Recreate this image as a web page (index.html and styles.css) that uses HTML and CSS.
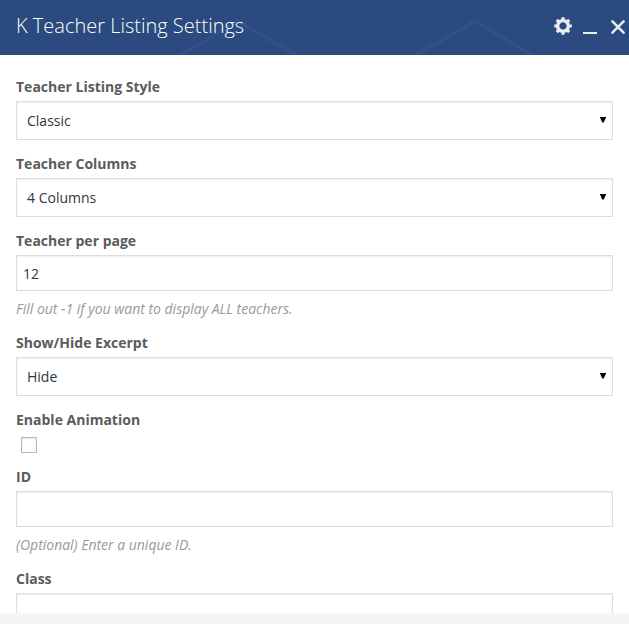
FILE: index.html
```html
<!DOCTYPE html>
<html lang="en">
<head>
<meta charset="utf-8">
<title>K Teacher Listing Settings</title>
<link rel="stylesheet" href="styles.css">
</head>
<body>
<div class="panel">
  <header class="header">
    <svg class="pattern" width="629" height="55" viewBox="0 0 629 55"><path d="M178 57L238 21L299 57M413 57L475 21L535 57"/></svg>
    <h1 class="title">K Teacher Listing Settings</h1>
    <div class="controls">
      <svg class="gear" width="18" height="18" viewBox="-9 -9 18 18">
        <circle r="5.4"/>
        <path d="M0-6V-8.8M0 6V8.8M-6 0H-8.8M6 0H8.8M4.2-4.2L6.2-6.2M-4.2-4.2L-6.2-6.2M4.2 4.2L6.2 6.2M-4.2 4.2L-6.2 6.2"/>
      </svg>
      <span class="minimize"></span>
      <svg class="close" width="14" height="14" viewBox="0 0 14 14"><path d="M1.4 1.4L12.6 12.6M12.6 1.4L1.4 12.6"/></svg>
    </div>
  </header>
  <main class="form">
    <div class="field">
      <div class="label">Teacher Listing Style</div>
      <div class="box select"><span>Classic</span><i class="arrow"></i></div>
    </div>
    <div class="field">
      <div class="label">Teacher Columns</div>
      <div class="box select"><span>4 Columns</span><i class="arrow"></i></div>
    </div>
    <div class="field">
      <div class="label">Teacher per page</div>
      <div class="box input">12</div>
      <div class="hint">Fill out -1 if you want to display ALL teachers.</div>
    </div>
    <div class="field">
      <div class="label">Show/Hide Excerpt</div>
      <div class="box select"><span>Hide</span><i class="arrow"></i></div>
    </div>
    <div class="field">
      <div class="label">Enable Animation</div>
      <div class="checkbox"></div>
    </div>
    <div class="field">
      <div class="label">ID</div>
      <div class="box input"></div>
      <div class="hint">(Optional) Enter a unique ID.</div>
    </div>
    <div class="field">
      <div class="label">Class</div>
      <div class="box input"></div>
    </div>
  </main>
  <footer class="footer"></footer>
</div>
</body>
</html>
```
FILE: styles.css
```css
* { box-sizing: border-box; }
body {
  margin: 0;
  font: 14px/20px "Open Sans", sans-serif;
  color: #32373c;
  background: #fff;
}
.panel {
  display: flex;
  flex-direction: column;
  height: 624px;
  overflow: hidden;
}
.header {
  position: relative;
  display: flex;
  flex: 0 0 55px;
  justify-content: space-between;
  padding: 0 4px 0 16px;
  background: #2b4b80;
}
.pattern { position: absolute; left: 0; top: 0; }
.pattern path { fill: none; stroke: #305088; stroke-width: 4; }
.title {
  position: relative;
  margin: 0;
  font-size: 20px;
  font-weight: 300;
  line-height: 52px;
  color: #fff;
  white-space: nowrap;
}
.controls { position: relative; display: flex; align-items: flex-start; }
.gear { margin: 17px 11px 0 0; }
.gear circle { fill: none; stroke: #eaedf4; stroke-width: 3.4; }
.gear path { fill: none; stroke: #eaedf4; stroke-width: 3.2; }
.minimize { width: 14px; height: 2px; margin: 32px 14px 0 0; background: #eaedf4; }
.close { margin-top: 20px; }
.close path { fill: none; stroke: #eaedf4; stroke-width: 2.5; stroke-linecap: round; }
.form {
  display: flex;
  flex: 0 0 558px;
  flex-direction: column;
  gap: 14px;
  padding: 22px 16px 0;
  overflow: hidden;
}
.field { flex: none; }
.label { height: 20px; margin-bottom: 4px; font-weight: 700; color: #5b5b5b; }
.box {
  display: flex;
  align-items: center;
  border: 1px solid #ddd;
  box-shadow: inset 0 1px 2px rgba(0, 0, 0, .07);
}
.select { justify-content: space-between; height: 39px; padding: 0 6px 0 10px; }
.arrow {
  width: 6px;
  height: 6px;
  margin-top: -2px;
  background: #000;
  clip-path: polygon(0 0, 100% 0, 100% 15%, 62% 100%, 38% 100%, 0 15%);
}
.input { height: 36px; padding: 2px 6px 0; }
.hint { margin-top: 8px; font-style: italic; letter-spacing: -.01px; color: #999; }
.checkbox {
  width: 16px;
  height: 16px;
  margin: 7px 0 0 5px;
  border: 1px solid #b4b9be;
  box-shadow: inset 0 1px 2px rgba(0, 0, 0, .1);
}
.footer { flex: 1; background: #f5f5f5; }
```
